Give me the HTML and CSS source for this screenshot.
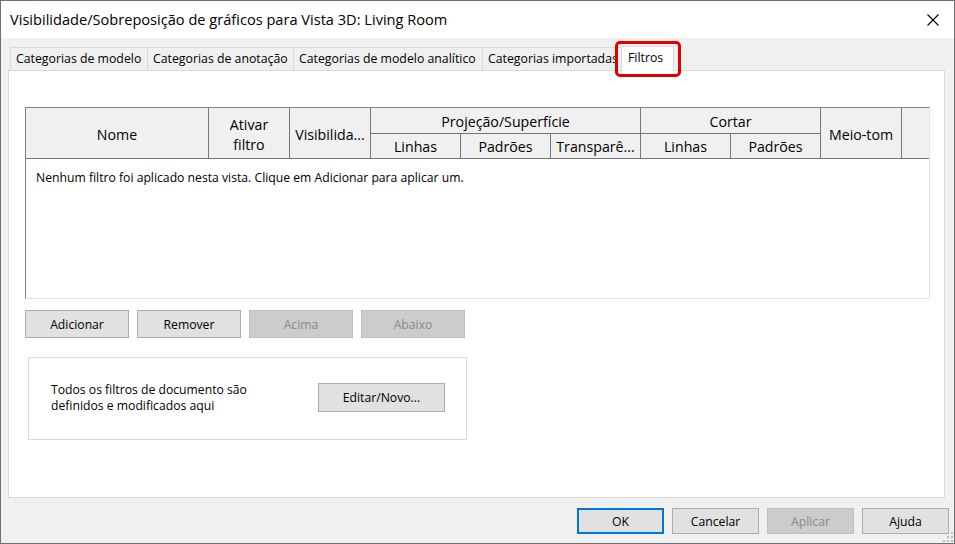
FILE: index.html
```html
<!DOCTYPE html>
<html lang="pt">
<head>
    <meta charset="UTF-8">
    <meta name="viewport" content="width=device-width, initial-scale=1.0">
    <title>Visibilidade/Sobreposição de gráficos</title>
    <link rel="stylesheet" href="styles.css">
</head>
<body>
    <div class="janela">
        <div class="barra-titulo">
            <span class="titulo">Visibilidade/Sobreposição de gráficos para Vista 3D: Living Room</span>
            <div class="fechar">
                <svg width="12" height="12" viewBox="0 0 12 12">
                    <path d="M0.5 0.5 L11.5 11.5 M11.5 0.5 L0.5 11.5" stroke="#000" stroke-width="1.1" fill="none"/>
                </svg>
            </div>
        </div>

        <div class="conteudo">
            <div class="abas">
                <div class="aba" style="width: 138px">Categorias de modelo</div>
                <div class="aba" style="width: 147px">Categorias de anotação</div>
                <div class="aba" style="width: 190px">Categorias de modelo analítico</div>
                <div class="aba" style="width: 140px">Categorias importadas</div>
                <div class="aba ativa">
                    Filtros
                    <span class="destaque"></span>
                </div>
            </div>

            <div class="painel">
                <div class="tabela">
                    <div class="cabecalho">
                        <div class="cel alta">Nome</div>
                        <div class="cel alta">Ativar<br>filtro</div>
                        <div class="cel alta">Visibilida...</div>
                        <div class="cel grupo-proj">Projeção/Superfície</div>
                        <div class="cel grupo-cortar">Cortar</div>
                        <div class="cel alta">Meio-tom</div>
                        <div class="cel alta vazia"></div>
                        <div class="cel">Linhas</div>
                        <div class="cel">Padrões</div>
                        <div class="cel">Transparê...</div>
                        <div class="cel">Linhas</div>
                        <div class="cel">Padrões</div>
                    </div>
                    <div class="corpo">
                        Nenhum filtro foi aplicado nesta vista. Clique em Adicionar para aplicar um.
                    </div>
                </div>

                <div class="botoes-filtro">
                    <div class="botao">Adicionar</div>
                    <div class="botao">Remover</div>
                    <div class="botao desativado">Acima</div>
                    <div class="botao desativado">Abaixo</div>
                </div>

                <div class="caixa-doc">
                    <div class="texto-doc">Todos os filtros de documento são<br>definidos e modificados aqui</div>
                    <div class="botao editar">Editar/Novo...</div>
                </div>
            </div>

            <div class="rodape">
                <div class="botao pequeno ok">OK</div>
                <div class="botao pequeno">Cancelar</div>
                <div class="botao pequeno desativado">Aplicar</div>
                <div class="botao pequeno">Ajuda</div>
            </div>
        </div>

        <svg class="alca" width="12" height="12" viewBox="0 0 12 12">
            <rect x="9" y="1" width="2" height="2" fill="#bcbcbc"/>
            <rect x="5" y="5" width="2" height="2" fill="#bcbcbc"/>
            <rect x="9" y="5" width="2" height="2" fill="#bcbcbc"/>
            <rect x="1" y="9" width="2" height="2" fill="#bcbcbc"/>
            <rect x="5" y="9" width="2" height="2" fill="#bcbcbc"/>
            <rect x="9" y="9" width="2" height="2" fill="#bcbcbc"/>
        </svg>
    </div>
</body>
</html>
```

FILE: styles.css
```css
* {
    box-sizing: border-box;
    font-family: "Segoe UI", "Open Sans", sans-serif;
}

body {
    margin: 0;
    background-color: #ffffff;
}

.janela {
    position: relative;
    width: 955px;
    height: 544px;
    border: 1px solid #6f6f6f;
    background-color: #f0f0f0;
    display: flex;
    flex-direction: column;
}

.barra-titulo {
    height: 37px;
    background-color: #ffffff;
    display: flex;
    align-items: center;
    justify-content: space-between;
    padding-left: 9px;
    padding-right: 15px;
    flex-shrink: 0;
}

.barra-titulo .titulo {
    font-size: 14.6px;
    color: #000000;
    padding-bottom: 1px;
}

.fechar {
    display: flex;
    align-items: center;
}

.conteudo {
    flex: 1;
    display: flex;
    flex-direction: column;
    padding-top: 9px;
}

.abas {
    display: flex;
    height: 23px;
    padding-left: 9px;
    position: relative;
    z-index: 2;
}

.aba {
    height: 23px;
    border: 1px solid #d9d9d9;
    border-bottom: none;
    margin-right: -1px;
    background-color: #f0f0f0;
    font-size: 12.3px;
    line-height: 21px;
    padding-left: 5px;
    white-space: nowrap;
    overflow: hidden;
    color: #000000;
}

.aba.ativa {
    position: relative;
    width: 53px;
    height: 25px;
    margin-top: -1px;
    background-color: #ffffff;
    padding-left: 6px;
    line-height: 22px;
    overflow: visible;
}

.destaque {
    position: absolute;
    left: -7px;
    top: -6px;
    right: -8px;
    bottom: -6px;
    border: 3px solid #e00000;
    border-radius: 5px;
}

.painel {
    margin-left: 7px;
    width: 937px;
    height: 428px;
    border: 1px solid #d9d9d9;
    background-color: #ffffff;
    padding: 36px 0 0 16px;
}

.tabela {
    width: 905px;
    height: 192px;
    border: 1px solid #e3e3e3;
    border-top-color: #828282;
    border-left-color: #828282;
    display: flex;
    flex-direction: column;
}

.cabecalho {
    display: grid;
    grid-template-columns: 183px 81px 81px 90px 90px 90px 90px 90px 81px 1fr;
    grid-template-rows: 26px 25px;
    background-color: #f0f0f0;
}

.cel {
    border-right: 1px solid #767676;
    border-bottom: 1px solid #767676;
    display: flex;
    align-items: center;
    justify-content: center;
    text-align: center;
    padding-top: 2px;
    font-size: 14.2px;
    line-height: 20px;
    color: #000000;
    white-space: nowrap;
    overflow: hidden;
}

.cel.alta {
    grid-row: span 2;
    padding-top: 3px;
}

.cel.vazia {
    border-right: none;
}

.grupo-proj {
    grid-column: span 3;
}

.grupo-cortar {
    grid-column: span 2;
}

.corpo {
    flex: 1;
    background-color: #ffffff;
    padding: 10px 0 0 10px;
    font-size: 12.2px;
    color: #000000;
}

.botoes-filtro {
    display: flex;
    gap: 8px;
    margin-top: 11px;
}

.botao {
    width: 104px;
    height: 28px;
    background-color: #e1e1e1;
    border: 1px solid #adadad;
    display: flex;
    align-items: center;
    justify-content: center;
    font-size: 12.2px;
    color: #000000;
}

.botao.desativado {
    background-color: #cccccc;
    border-color: #bfbfbf;
    color: #8a8a8a;
}

.caixa-doc {
    width: 439px;
    height: 83px;
    margin: 19px 0 0 3px;
    border: 1px solid #dcdcdc;
    display: flex;
    align-items: center;
    justify-content: space-between;
    padding: 0 21px 2px 22px;
}

.texto-doc {
    font-size: 12.2px;
    line-height: 16px;
    color: #000000;
}

.botao.editar {
    width: 127px;
    height: 29px;
}

.rodape {
    display: flex;
    justify-content: flex-end;
    gap: 8px;
    padding: 10px 5px 0 0;
}

.botao.pequeno {
    width: 87px;
    height: 26px;
}

.botao.ok {
    border: 2px solid #0078d7;
}

.alca {
    position: absolute;
    right: 0;
    bottom: 0;
}
```
